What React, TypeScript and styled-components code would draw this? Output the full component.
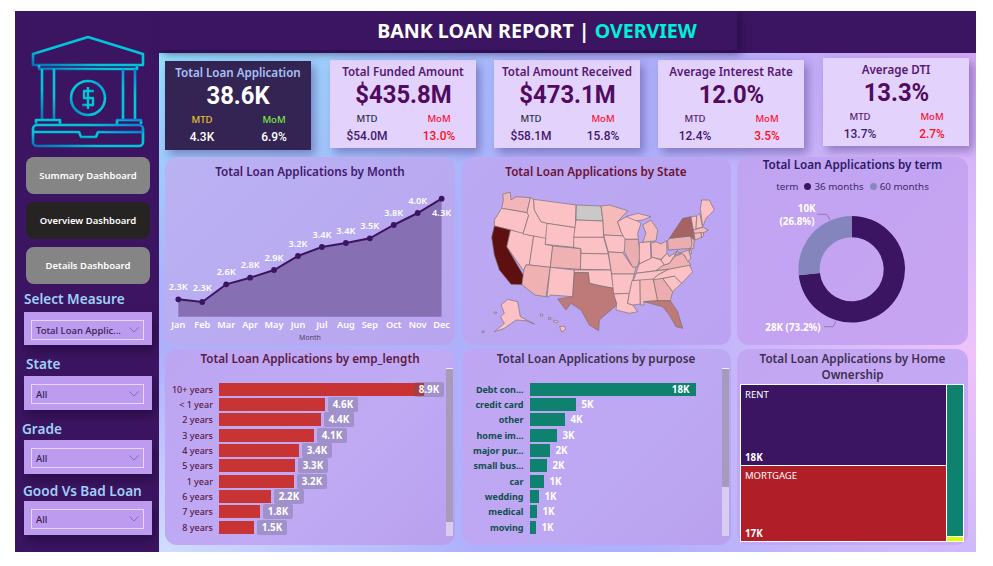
import React from "react";
import styled, { createGlobalStyle } from "styled-components";

const Global = createGlobalStyle`
  html, body { margin: 0; padding: 0; background: #fff; }
  * { box-sizing: border-box; }
  body { font-family: "Noto Sans", "Open Sans", sans-serif; }
`;

const Frame = styled.div`
  margin: 11px 0 0 15px; width: 961px; height: 541px; display: flex; background: #3c1562; overflow: hidden;
`;
const Sidebar = styled.aside`
  width: 144px; flex: none; display: flex; flex-direction: column; background: #3c1562;
`;
const Logo = styled.svg`
  display: block; width: 116px; height: 114px; margin: 24px 0 8px 15px;
`;
const NavButton = styled.div<{ $active?: boolean }>`
  width: 124px; height: 37px; margin: 0 0 8px 11px; border-radius: 8px;
  display: flex; align-items: center; justify-content: center;
  background: ${p => (p.$active ? "#252423" : "#858585")};
  color: #fff; font-size: 9.5px; font-weight: 600; white-space: nowrap;
`;
const FilterLabel = styled.div<{ $left: number; $top: number }>`
  margin: ${p => p.$top}px 0 0 ${p => p.$left}px; height: 18px; line-height: 18px;
  color: #9fd0f8; font-size: 13.6px; font-weight: 600; white-space: nowrap;
`;
const Slicer = styled.div<{ $h: number; $gap: number }>`
  margin: ${p => p.$gap}px 0 0 9px; width: 128px; height: ${p => p.$h}px; background: #bd9cf0;
  padding: 8px 8px 0 7px; box-shadow: 3px 6px 10px rgba(25, 8, 50, .55);
`;
const SlicerBox = styled.div`
  height: 20px; border: 1px solid #e4d7f8; display: flex; align-items: center; justify-content: space-between;
  padding: 0 4px 0 4px; color: #35204f; font-size: 9.5px; font-weight: 500; white-space: nowrap;
`;
const Right = styled.div`
  flex: 1; display: flex; flex-direction: column; min-width: 0;
`;
const Header = styled.header`
  height: 42px; flex: none; background: #3c1562; display: flex; position: relative; z-index: 1;
`;
const TitleBar = styled.div`
  width: 578px; height: 39px; display: flex; align-items: center; justify-content: center;
  padding-left: 178px; box-shadow: 4px 3px 8px rgba(30, 10, 60, .6);
  color: #fff; font-size: 19.6px; font-weight: 700; white-space: nowrap;
`;
const Accent = styled.span`
  color: #00f0d8; margin-left: 5px;
`;
const Main = styled.main`
  flex: 1; padding: 0 0 0 6px; display: flex; flex-direction: column;
  background:
    radial-gradient(420px 240px at 0% 0%, #94e2fc 0%, rgba(148,226,252,0) 100%),
    radial-gradient(320px 200px at 0% 100%, #d0dcff 0%, rgba(208,220,255,0) 100%),
    radial-gradient(380px 400px at 100% 60%, #f0c2fb 0%, rgba(240,194,251,0) 100%),
    radial-gradient(300px 200px at 100% 0%, #c89df0 0%, rgba(200,157,240,0) 100%),
    #aeb0fb;
`;
const KpiRow = styled.div`
  height: 104px; flex: none; display: flex; align-items: flex-start;
`;
const Kpi = styled.div<{ $dark?: boolean; $top: number; $lead: number; $h: number }>`
  width: 146px; height: ${p => p.$h}px; margin: ${p => p.$top}px 0 0 ${p => p.$lead}px; padding-top: 4px;
  background: ${p => (p.$dark ? "#342454" : "#e3d2fc")};
  box-shadow: 4px 5px 9px rgba(70, 50, 130, .45);
  text-align: center; display: flex; flex-direction: column; align-items: center;
`;
const KpiTitle = styled.div<{ $dark?: boolean }>`
  height: 16px; line-height: 16px; font-size: 11.6px; font-weight: 600; white-space: nowrap;
  color: ${p => (p.$dark ? "#a9c2f5" : "#57186f")};
`;
const KpiValue = styled.div<{ $dark?: boolean }>`
  height: 28px; line-height: 28px; font-family: Roboto, sans-serif; font-weight: 700; font-size: 26.5px; white-space: nowrap;
  transform: scaleX(.9);
  color: ${p => (p.$dark ? "#fff" : "#500a5e")};
`;
const KpiGrid = styled.div`
  margin-top: 3px; width: 100%; display: grid; grid-template-columns: 1fr 1fr; padding: 0 1px;
`;
const KpiSub = styled.div<{ $c: string }>`
  height: 15px; line-height: 15px; font-size: 9.5px; font-weight: 500; color: ${p => p.$c};
`;
const KpiNum = styled.div<{ $c: string }>`
  height: 18px; line-height: 18px; font-family: Roboto, sans-serif; font-size: 13.6px; font-weight: 500; color: ${p => p.$c};
  transform: scaleX(.88);
`;
const Charts = styled.div`
  display: grid; grid-template-columns: 290px 269px 231px; grid-template-rows: 188px 196px; column-gap: 6.5px; row-gap: 4px;
`;
const Panel = styled.section<{ $bg: string }>`
  border-radius: 12px; overflow: hidden; display: flex; flex-direction: column; background: ${p => p.$bg};
`;
const PanelTitle = styled.h3<{ $c: string; $h?: number }>`
  margin: 0; flex: none; height: ${p => p.$h ?? 28}px; line-height: ${p => p.$h ?? 28}px; text-align: center;
  color: ${p => p.$c}; font-size: 11.7px; font-weight: 600; white-space: nowrap;
`;
const WrappedTitle = styled.span`
  display: block; line-height: 16px; padding-top: 1px; white-space: normal;
`;
const Svg = styled.svg`
  display: block; flex: none;
`;
const Legend = styled.div`
  height: 14px; margin-top: 7px; display: flex; align-items: center; justify-content: center; gap: 3px;
  font-size: 9.8px; color: #3c2a66; white-space: nowrap;
`;
const Dot = styled.i<{ $c: string }>`
  width: 7px; height: 7px; border-radius: 50%; background: ${p => p.$c}; margin-left: 3px;
`;
const BarBody = styled.div`
  display: flex; flex: 1; min-height: 0;
`;
const BarList = styled.div<{ $pad: number }>`
  flex: 1; padding-top: ${p => p.$pad}px; display: flex; flex-direction: column; gap: 2.37px;
`;
const BarRow = styled.div`
  height: 13px; display: flex; align-items: center;
`;
const BarLabel = styled.div<{ $w: number; $c: string; $bold?: boolean }>`
  width: ${p => p.$w}px; flex: none; text-align: right; margin-right: 6px; color: ${p => p.$c};
  font-size: 9px; font-weight: ${p => (p.$bold ? 700 : 500)}; white-space: nowrap;
`;
const Bar = styled.div<{ $c: string }>`
  height: 13px; background: ${p => p.$c}; flex: none; display: flex; align-items: center; justify-content: flex-end;
`;
const Badge = styled.span<{ $over?: boolean }>`
  margin-left: ${p => (p.$over ? -10 : 3)}px; width: 30px; height: 15px; flex: none; border-radius: 2px; text-align: center; line-height: 15px;
  background: rgba(90, 90, 110, .3); color: #fff; font-size: 9.8px; font-weight: 700;
`;
const PlainVal = styled.span<{ $inside?: boolean }>`
  color: #fff; font-size: 9.8px; font-weight: 700; margin-left: 6px; margin-right: ${p => (p.$inside ? 6 : 0)}px;
`;
const Scroll = styled.div<{ $thumb: number }>`
  width: 7px; flex: none; height: 168px; margin: 1px 2px 0 0; background: #d8ccf0; border-top: 1px solid #eee;
  &::after { content: ""; display: block; height: ${p => p.$thumb}px; background: #a69bbd; }
`;
const Treemap = styled.div`
  margin: 0 0 0 3px; width: 224px; height: 158px; border: 1px solid #fff; display: flex; background: #fff; gap: 1px;
`;
const TreeCol = styled.div<{ $w: number }>`
  width: ${p => p.$w}px; flex: none; display: flex; flex-direction: column; gap: 1px;
`;
const Tile = styled.div<{ $c: string; $h?: number }>`
  flex: ${p => (p.$h ? `none` : "1")}; height: ${p => (p.$h ? `${p.$h}px` : "auto")}; background: ${p => p.$c};
  color: #fff; padding: 3px 4px 1px; display: flex; flex-direction: column; justify-content: space-between;
  font-size: 9.5px;
`;
const TileValue = styled.b`
  font-size: 9.8px; font-weight: 700;
`;
const ChartText = styled.text<{ $size: number; $weight?: number; $c?: string }>`
  font-family: "Noto Sans", sans-serif; font-size: ${p => p.$size}px; font-weight: ${p => p.$weight ?? 600}; fill: ${p => p.$c ?? "#fff"}; text-anchor: middle;
`;

const Chevron = () => (
  <svg width="10" height="6" viewBox="0 0 10 6" fill="none"><path d="M.5.5 5 5 9.5.5" stroke="#8a6bb8" strokeWidth="1" /></svg>
);

const months = ["Jan","Feb","Mar","Apr","May","Jun","Jul","Aug","Sep","Oct","Nov","Dec"];
const vals = ["2.3K","2.3K","2.6K","2.8K","2.9K","3.2K","3.4K","3.4K","3.5K","3.8K","4.0K","4.3K"];
const ys = [448,456,403,383,360,318,291,279,265,225,189,146];
const px = (i: number) => (55 + i * 71.8 - 15) / 3;
const py = (y: number) => (y - 105) / 3;
const line = ys.map((y, i) => `${px(i).toFixed(1)},${py(y).toFixed(1)}`).join(" ");

const S: [string, string][] = [
  ["#f2b5b8","125,132 148,127 150,150 165,140 208,143 198,188 140,178 122,175 127,150"],
  ["#fcc1c4","122,175 140,178 198,188 203,196 186,252 148,240 100,228 100,210"],
  ["#fcc1c4","148,240 218,258 205,345 195,345 188,362 137,290"],
  ["#5e1010","100,228 148,240 137,290 188,377 183,404 150,403 115,360 100,315 92,262"],
  ["#fcc1c4","208,143 218,148 220,180 240,215 262,220 255,268 218,258 186,252 203,196 198,188"],
  ["#fcc1c4","218,148 345,165 343,233 258,220 240,215 220,180"],
  ["#fcc1c4","258,220 343,233 338,292 252,283"],
  ["#fcc1c4","218,258 255,265 252,283 275,288 268,352 205,345"],
  ["#f0b1b3","275,288 360,296 358,358 268,352"],
  ["#f0b1b3","205,345 268,352 255,440 222,435 183,404 188,362 195,345"],
  ["#fcc1c4","268,352 340,360 335,440 270,435 258,442"],
  ["#cbc9c8","346,165 420,168 426,213 345,210"],
  ["#fcc1c4","345,210 426,213 428,262 338,262"],
  ["#fcc1c4","338,262 428,262 442,312 360,310 360,296 338,292"],
  ["#fcc1c4","360,310 442,312 450,360 358,358"],
  ["#fcc1c4","340,360 450,360 458,415 420,408 385,400 382,368 340,368"],
  ["#bd7a78","340,368 382,368 385,400 420,408 458,415 467,465 415,510 413,542 385,525 360,480 330,460 315,480 290,447 335,440"],
  ["#f6baba","420,168 445,165 500,182 470,215 480,245 492,258 428,255 426,213"],
  ["#fcc1c4","428,255 492,258 498,295 485,308 442,306"],
  ["#f6baba","442,306 485,308 510,345 525,352 520,372 452,372"],
  ["#fcc1c4","452,372 520,372 505,430 458,432"],
  ["#fcc1c4","458,432 505,430 500,460 515,465 530,485 505,490 465,480 467,460"],
  ["#fcc1c4","470,215 500,198 527,212 540,220 530,250 532,268 492,268 480,245"],
  ["#eaaeb0","492,268 532,268 538,320 530,350 515,352 490,305"],
  ["#f6baba","545,225 570,210 590,240 585,272 545,278 555,250"],
  ["#fcc1c4","495,200 530,190 570,200 545,210 525,212"],
  ["#fcc1c4","535,278 568,275 570,325 535,342"],
  ["#f6baba","570,280 585,275 600,282 617,272 618,310 600,328 572,322"],
  ["#fcc1c4","530,355 535,342 570,325 575,322 600,330 610,345 585,362 525,370"],
  ["#fcc1c4","517,392 525,370 590,362 625,357 590,375 575,390"],
  ["#fcc1c4","513,392 537,390 538,462 515,465 500,460 505,430"],
  ["#f6baba","537,390 577,387 590,452 548,455 550,465 538,465"],
  ["#eaaeb0","577,387 605,385 635,425 628,452 590,452"],
  ["#bd7a78","550,455 590,452 628,452 650,485 665,535 645,530 625,495 605,470 575,462"],
  ["#fcc1c4","605,385 640,378 662,400 635,425"],
  ["#fcc1c4","590,375 625,357 685,345 695,365 662,400 640,378 605,385 575,390"],
  ["#f0b1b3","600,350 610,345 625,340 640,320 665,310 690,345 625,357 585,362"],
  ["#fcc1c4","600,330 618,310 625,320 650,302 640,318 625,340 610,345"],
  ["#eaaeb0","620,272 625,265 688,258 698,285 690,295 622,300"],
  ["#a66364","625,265 665,205 690,200 697,245 700,270 688,258"],
  ["#fcc1c4","690,200 707,198 705,240 697,240"],
  ["#fcc1c4","707,198 716,190 725,232 705,236"],
  ["#fcc1c4","718,175 722,150 745,150 760,180 735,205 725,230"],
  ["#f6baba","697,240 725,232 742,240 725,250 700,250"],
  ["#f6baba","700,250 720,248 722,262 702,270"],
  ["#fcc1c4","720,248 727,248 728,258 722,262"],
  ["#f0b1b3","690,262 700,270 698,295 688,298 693,282"],
  ["#fcc1c4","688,295 692,310 683,312"],
  ["#f6baba","640,315 683,300 690,325 680,335 670,315 650,305"],
  ["#fcc1c4","120,465 140,448 170,455 178,500 220,522 195,512 165,510 130,535 100,545 130,520 118,500 130,490"],
  ["#fcc1c4","296,530 310,528 314,538 302,546"],
  ["#fcc1c4","262,503 270,503 270,508 263,508"],
  ["#fcc1c4","278,510 292,514 288,519 278,516"],
  ["#fcc1c4","238,492 245,492 245,498 238,498"],
  ["#fcc1c4","63,543 70,543 70,547 63,547"],
  ["#fcc1c4","100,486 106,486 106,490 100,490"],
];

const emp: [string, number, string][] = [
  ["10+ years",205,"8.9K"],["< 1 year",106,"4.6K"],["2 years",102,"4.4K"],["3 years",95,"4.1K"],["4 years",80,"3.4K"],
  ["5 years",76,"3.3K"],["1 year",75,"3.2K"],["6 years",52,"2.2K"],["7 years",41,"1.8K"],["8 years",35,"1.5K"],
];
const purpose: [string, number, string][] = [
  ["Debt con...",166,"18K"],["credit card",46,"5K"],["other",35,"4K"],["home im...",27,"3K"],["major pur...",20,"2K"],
  ["small bus...",17,"2K"],["car",14,"1K"],["wedding",9,"1K"],["medical",7,"1K"],["moving",6,"1K"],
];

const kpis = [
  { t:"Total Funded Amount", v:"$435.8M", a:"$54.0M", b:"13.0%", top:7, lead:19, h:88, bc:"#fa1020", mc:"#2c2c3a" },
  { t:"Total Amount Received", v:"$473.1M", a:"$58.1M", b:"15.8%", top:7, lead:18, h:88, bc:"#42196e", mc:"#2c2c3a" },
  { t:"Average Interest Rate", v:"12.0%", a:"12.4%", b:"3.5%", top:7, lead:18, h:88, bc:"#fa1020", mc:"#57186f" },
  { t:"Average DTI", v:"13.3%", a:"13.7%", b:"2.7%", top:5, lead:19, h:88, bc:"#fa1020", mc:"#57186f" },
];

const arc = (cx: number, cy: number, R: number, r: number, a0: number, a1: number) => {
  const p = (rad: number, a: number) => [cx + rad * Math.sin(a), cy - rad * Math.cos(a)].map(n => n.toFixed(2)).join(" ");
  const large = a1 - a0 > Math.PI ? 1 : 0;
  return `M${p(R,a0)}A${R} ${R} 0 ${large} 1 ${p(R,a1)}L${p(r,a1)}A${r} ${r} 0 ${large} 0 ${p(r,a0)}Z`;
};

export default function App() {
  const split = 0.732 * Math.PI * 2;
  return (
    <>
      <Global />
      <Frame>
        <Sidebar>
          <Logo viewBox="30 35 116 114" fill="none">
            <defs>
              <linearGradient id="lg" x1="0" y1="1" x2="1" y2="0">
                <stop offset="0" stopColor="#0a6cb8" />
                <stop offset=".3" stopColor="#00c6da" />
                <stop offset=".75" stopColor="#00c6da" />
                <stop offset="1" stopColor="#0a7fd8" />
              </linearGradient>
            </defs>
            <g stroke="url(#lg)" strokeWidth="2.6" strokeLinejoin="round">
              <path d="M33 54 88 37l55 17v11H33Z" />
              <path d="M39 65v4h98v-4" />
              <path d="M42 69v51M54 69v51M123 69v51M135 69v51" />
              <path d="M36 124v-4h24v4M117 124v-4h24v4" />
              <rect x="33" y="125" width="110" height="21" rx="4" />
              <path d="M33 132h46l2 5h15l2-5h45" />
              <circle cx="88" cy="98" r="17" />
              <path d="M94 91H84v7h9v7H82M88 87v22" strokeWidth="2.4" />
            </g>
          </Logo>
          <NavButton>Summary Dashboard</NavButton>
          <NavButton $active>Overview Dashboard</NavButton>
          <NavButton>Details Dashboard</NavButton>
          <FilterLabel $left={9} $top={-2}>Select Measure</FilterLabel>
          <Slicer $h={33} $gap={4}>
            <SlicerBox>Total Loan Applic...<Chevron /></SlicerBox>
          </Slicer>
          <FilterLabel $left={11} $top={10}>State</FilterLabel>
          <Slicer $h={34} $gap={3}><SlicerBox>All<Chevron /></SlicerBox></Slicer>
          <FilterLabel $left={7} $top={10}>Grade</FilterLabel>
          <Slicer $h={34} $gap={2}><SlicerBox>All<Chevron /></SlicerBox></Slicer>
          <FilterLabel $left={8} $top={8}>Good Vs Bad Loan</FilterLabel>
          <Slicer $h={34} $gap={1}><SlicerBox>All<Chevron /></SlicerBox></Slicer>
        </Sidebar>
        <Right>
          <Header>
            <TitleBar>BANK LOAN REPORT | <Accent>OVERVIEW</Accent></TitleBar>
          </Header>
          <Main>
            <KpiRow>
              <Kpi $dark $top={8} $lead={0} $h={89}>
                <KpiTitle $dark>Total Loan Application</KpiTitle>
                <KpiValue $dark>38.6K</KpiValue>
                <KpiGrid>
                  <KpiSub $c="#e8c52a">MTD</KpiSub><KpiSub $c="#7be840">MoM</KpiSub>
                  <KpiNum $c="#fff">4.3K</KpiNum><KpiNum $c="#fff">6.9%</KpiNum>
                </KpiGrid>
              </Kpi>
              {kpis.map(k => (
                <Kpi key={k.t} $top={k.top} $lead={k.lead} $h={k.h}>
                  <KpiTitle>{k.t}</KpiTitle>
                  <KpiValue>{k.v}</KpiValue>
                  <KpiGrid>
                    <KpiSub $c={k.mc}>MTD</KpiSub><KpiSub $c="#fa1030">MoM</KpiSub>
                    <KpiNum $c="#42196e">{k.a}</KpiNum><KpiNum $c={k.bc}>{k.b}</KpiNum>
                  </KpiGrid>
                </Kpi>
              ))}
            </KpiRow>
            <Charts>
              <Panel $bg="linear-gradient(135deg,#bab2f3,#b9a4ef)">
                <PanelTitle $c="#43196b">Total Loan Applications by Month</PanelTitle>
                <Svg width="290" height="160" viewBox="0 0 290 160">
                  <polygon points={`${px(0)},${py(500)} ${line} ${px(11)},${py(500)}`} fill="#866fb3" />
                  <polyline points={line} fill="none" stroke="#3c1562" strokeWidth="2" />
                  {ys.map((y, i) => <circle key={i} cx={px(i)} cy={py(y)} r="2.9" fill="#3c1562" />)}
                  {vals.map((v, i) => (
                    <ChartText key={i} $size={9.2} x={px(i)} y={i === 11 ? py(197) : i === 1 ? py(ys[i]) - 11 : py(ys[i]) - 9.5}>{v}</ChartText>
                  ))}
                  {months.map((m, i) => (
                    <ChartText key={m} $size={9.2} x={px(i)} y="143">{m}</ChartText>
                  ))}
                  <ChartText $size={7} $weight={400} $c="#4f4464" x="145" y="155">Month</ChartText>
                </Svg>
              </Panel>
              <Panel $bg="linear-gradient(135deg,#bba9f3,#bca3f2)">
                <PanelTitle $c="#6b1235">Total Loan Applications by State</PanelTitle>
                <Svg width="269" height="160" viewBox="3 105 807 480">
                  {S.map(([c, pts], i) => (
                    <polygon key={i} points={pts} fill={c} stroke="#7a7070" strokeWidth="2" strokeLinejoin="round" />
                  ))}
                </Svg>
              </Panel>
              <Panel $bg="linear-gradient(135deg,#c0a4f2,#c8a4f2)">
                <PanelTitle $c="#2c1a66" $h={15}>Total Loan Applications by term</PanelTitle>
                <Legend>term<Dot $c="#3c1562" /> 36 months<Dot $c="#8888bd" /> 60 months</Legend>
                <Svg width="231" height="152" viewBox="0 0 231 152">
                  <path d={arc(114.7, 76.3, 53.3, 32, 0, split)} fill="#3c1562" />
                  <path d={arc(114.7, 76.3, 53.3, 32, split, Math.PI * 2)} fill="#8585bd" />
                  <path d="M80.3 21.3h9.4l3.3 5.7M87 133.7h9.3l2.7-6" fill="none" stroke="#8d7ea8" strokeWidth="1" />
                  <ChartText $size={9.8} $weight={700} x="69.7" y="19">10K</ChartText>
                  <ChartText $size={9.8} $weight={700} x="60" y="32">(26.8%)</ChartText>
                  <ChartText $size={9.8} $weight={700} x="56" y="138">28K (73.2%)</ChartText>
                </Svg>
              </Panel>
              <Panel $bg="linear-gradient(135deg,#bca6f2,#c0aaf4 60%,#b9a0ee)">
                <PanelTitle $c="#5c1a45" $h={18}>Total Loan Applications by emp_length</PanelTitle>
                <BarBody>
                  <BarList $pad={15.5}>
                    {emp.map(([l, w, v], i) => (
                      <BarRow key={l}>
                        <BarLabel $w={48} $c="#5c1a45">{l}</BarLabel>
                        <Bar $c="#c83333" style={{ width: w }} />
                        <Badge $over={i === 0}>{v}</Badge>
                      </BarRow>
                    ))}
                  </BarList>
                  <Scroll $thumb={153} />
                </BarBody>
              </Panel>
              <Panel $bg="linear-gradient(135deg,#c0a6f2,#bda8f3 60%,#b9a0ee)">
                <PanelTitle $c="#3f3053" $h={18}>Total Loan Applications by purpose</PanelTitle>
                <BarBody>
                  <BarList $pad={15.5}>
                    {purpose.map(([l, w, v], i) => (
                      <BarRow key={l}>
                        <BarLabel $w={62} $c="#0e4f4c" $bold>{l}</BarLabel>
                        <Bar $c="#0f826f" style={{ width: w }}>{i === 0 && <PlainVal $inside>{v}</PlainVal>}</Bar>
                        {i > 0 && <PlainVal>{v}</PlainVal>}
                      </BarRow>
                    ))}
                  </BarList>
                  <Scroll $thumb={118} />
                </BarBody>
              </Panel>
              <Panel $bg="linear-gradient(135deg,#c2a6f2,#c8aaf4)">
                <PanelTitle $c="#3f3053" $h={35}>
                  <WrappedTitle>Total Loan Applications by Home Ownership</WrappedTitle>
                </PanelTitle>
                <Treemap>
                  <TreeCol $w={205}>
                    <Tile $c="#3c1562" $h={80}>RENT<TileValue>18K</TileValue></Tile>
                    <Tile $c="#b01e28">MORTGAGE<TileValue>17K</TileValue></Tile>
                  </TreeCol>
                  <TreeCol $w={16}>
                    <Tile $c="#0f826f" />
                    <Tile $c="#dcff00" $h={4} />
                  </TreeCol>
                </Treemap>
              </Panel>
            </Charts>
          </Main>
        </Right>
      </Frame>
    </>
  );
}
